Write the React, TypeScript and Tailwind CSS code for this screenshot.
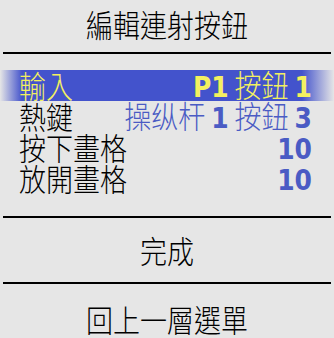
const cjk = { fontFamily: '"Noto Sans CJK TC", "Noto Sans CJK SC", sans-serif' };
const num = { fontFamily: '"DejaVu Sans", "Noto Sans CJK TC", sans-serif' };

function Divider() {
  return <div className="mx-[3px] h-[2px] bg-black" />;
}

function Row({ label, children, active = false }: { label: string; children: React.ReactNode; active?: boolean }) {
  return (
    <div
      className={`flex h-[31px] items-center justify-between pl-[19px] pr-[22px] ${
        active
          ? 'bg-[linear-gradient(to_right,#e6e6e6_0px,#4353cc_22px,#4353cc_302px,#e6e6e6_334px)] text-[#f3f060]'
          : 'text-black'
      }`}
    >
      <span className="inline-block scale-y-[1.12] font-light">{label}</span>
      <span className={`inline-block scale-y-[1.12] font-light ${active ? 'text-[#f3f060]' : 'text-[#4a5bc4]'}`}>
        {children}
      </span>
    </div>
  );
}

const N = ({ v }: { v: string }) => (
  <span style={num} className="text-[25px] font-bold">
    {v}
  </span>
);

export default function App() {
  return (
    <div style={cjk} className="h-[338px] w-[334px] overflow-hidden bg-[#e6e6e6] text-[27px] leading-none text-black">
      <div className="flex h-[52px] items-center justify-center pb-[4px]">
        <span className="inline-block scale-y-[1.12] font-light">編輯連射按鈕</span>
      </div>
      <Divider />
      <div className="pt-[16px]">
        <Row label="輸入" active>
          <N v="P1" /> 按鈕 <N v="1" />
        </Row>
        <Row label="熱鍵">
          操纵杆 <N v="1" /> 按鈕 <N v="3" />
        </Row>
        <Row label="按下畫格">
          <N v="10" />
        </Row>
        <Row label="放開畫格">
          <N v="10" />
        </Row>
      </div>
      <div className="h-[22px]" />
      <Divider />
      <div className="flex h-[64px] items-center justify-center">
        <span className="inline-block scale-y-[1.12] font-light">完成</span>
      </div>
      <Divider />
      <div className="flex h-[54px] items-start justify-center pt-[22px]">
        <span className="inline-block scale-y-[1.12] font-light">回上一層選單</span>
      </div>
    </div>
  );
}
